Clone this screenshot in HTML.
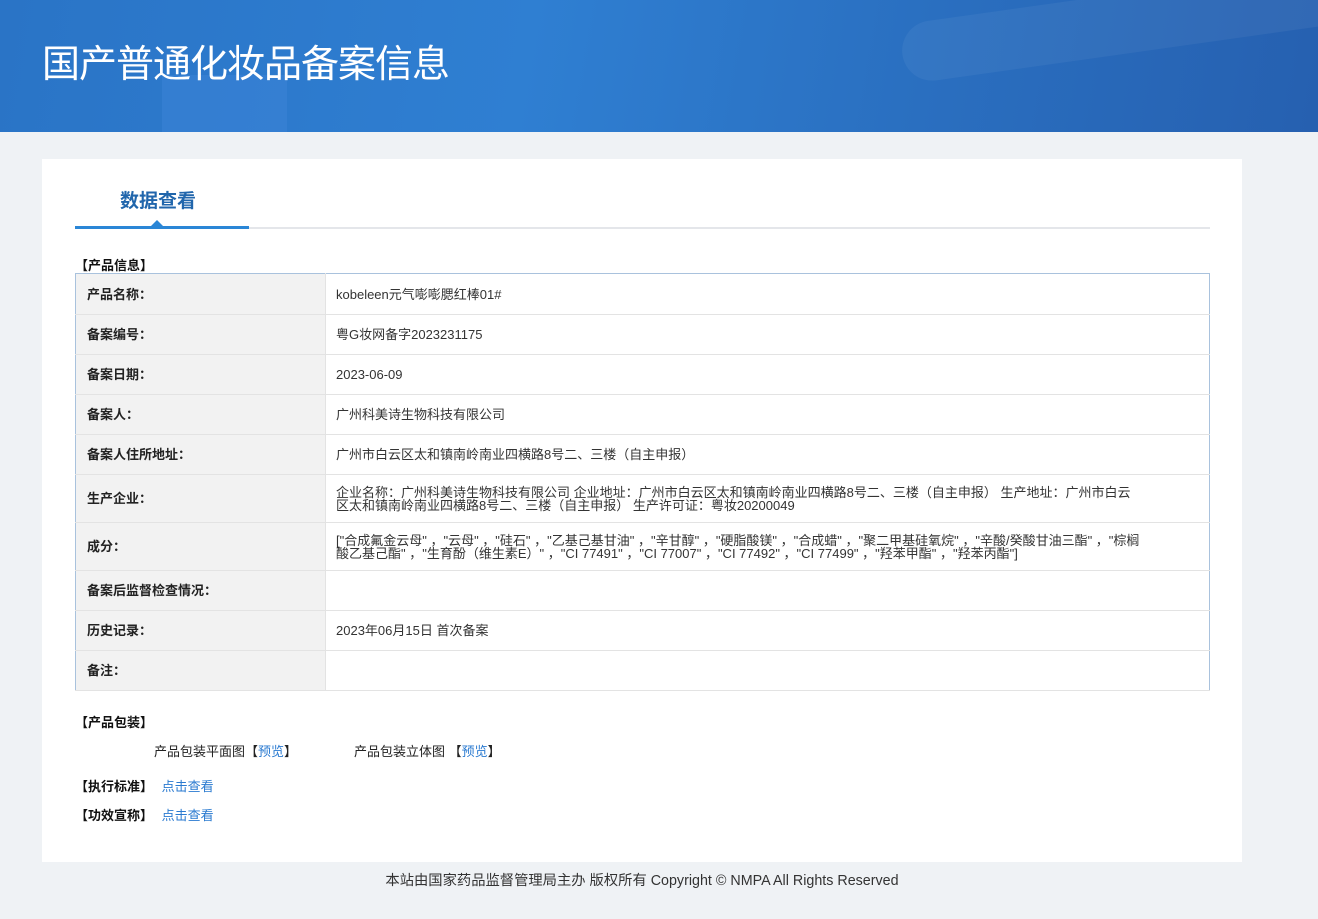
<!DOCTYPE html>
<html><head><meta charset="utf-8"><style>
*{margin:0;padding:0;box-sizing:border-box}
body{width:1318px;height:919px;background:#eff2f5;font-family:"Liberation Sans","Noto Sans CJK SC",sans-serif;font-size:13px;color:#333;position:relative;overflow:hidden}
.hdr{position:absolute;left:0;top:0;width:1318px;height:132px;background:linear-gradient(100deg,#2a74c6 0%,#2f7fd2 40%,#2a6fc0 70%,#2660b0 100%);overflow:hidden}
.hdr .b1{position:absolute;left:162px;top:75px;width:125px;height:60px;background:#3b82d6;opacity:.6}
.hdr .b2{position:absolute;left:900px;top:-10px;width:500px;height:60px;border-radius:40px;background:rgba(255,255,255,.05);transform:rotate(-8deg)}
.hdr h1{position:absolute;left:42px;top:33px;font-size:38px;font-weight:normal;color:#fff;letter-spacing:-1px}
.card{position:absolute;left:42px;top:159px;width:1200px;height:703px;background:#fff}
.tabline{position:absolute;left:33px;top:68px;width:1135px;height:2px;background:#e4e6ea}
.tabact{position:absolute;left:33px;top:67px;width:174px;height:3px;background:#2a86d6}
.tri{position:absolute;left:108px;top:61px;width:0;height:0;border-left:7px solid transparent;border-right:7px solid transparent;border-bottom:7px solid #2a86d6}
.tab{position:absolute;left:78px;top:27px;font-size:19px;font-weight:bold;color:#2166ac}
.sec{position:absolute;font-weight:bold;color:#111;font-size:13px}
table{position:absolute;left:33px;top:114px;width:1135px;border-collapse:collapse;border:1px solid #a9c2dd}
td{border-bottom:1px solid #e3e3e3;vertical-align:middle;font-size:13px;line-height:13px}
td.l{width:250px;background:#f2f2f2;font-weight:bold;padding-left:11px;color:#222;border-right:1px solid #e3e3e3}
td.v{padding-left:10px;padding-right:55px;color:#333}
.a{color:#2a7ad0}
</style></head><body>
<div class="hdr"><div class="b2"></div><div class="b1"></div><h1>国产普通化妆品备案信息</h1></div>
<div class="card">
<div class="tab">数据查看</div>
<div class="tabline"></div><div class="tabact"></div><div class="tri"></div>
<div class="sec" style="left:33px;top:96px">【产品信息】</div>
<table>
<tr style="height:41px"><td class="l">产品名称：</td><td class="v">kobeleen元气嘭嘭腮红棒01#</td></tr>
<tr style="height:40px"><td class="l">备案编号：</td><td class="v">粤G妆网备字2023231175</td></tr>
<tr style="height:40px"><td class="l">备案日期：</td><td class="v">2023-06-09</td></tr>
<tr style="height:40px"><td class="l">备案人：</td><td class="v">广州科美诗生物科技有限公司</td></tr>
<tr style="height:40px"><td class="l">备案人住所地址：</td><td class="v">广州市白云区太和镇南岭南业四横路8号二、三楼（自主申报）</td></tr>
<tr style="height:48px"><td class="l">生产企业：</td><td class="v">企业名称：广州科美诗生物科技有限公司 企业地址：广州市白云区太和镇南岭南业四横路8号二、三楼（自主申报） 生产地址：广州市白云<br>区太和镇南岭南业四横路8号二、三楼（自主申报） 生产许可证：粤妆20200049</td></tr>
<tr style="height:48px"><td class="l">成分：</td><td class="v">["合成氟金云母" ，"云母" ，"硅石" ，"乙基己基甘油" ，"辛甘醇" ，"硬脂酸镁" ，"合成蜡" ，"聚二甲基硅氧烷" ，"辛酸/癸酸甘油三酯" ，"棕榈<br>酸乙基己酯" ，"生育酚（维生素E）" ，"CI 77491" ，"CI 77007" ，"CI 77492" ，"CI 77499" ，"羟苯甲酯" ，"羟苯丙酯"]</td></tr>
<tr style="height:40px"><td class="l">备案后监督检查情况：</td><td class="v"></td></tr>
<tr style="height:40px"><td class="l">历史记录：</td><td class="v">2023年06月15日 首次备案</td></tr>
<tr style="height:40px"><td class="l">备注：</td><td class="v"></td></tr>
</table>
<div class="sec" style="left:33px;top:553px">【产品包装】</div>
<div style="position:absolute;left:112px;top:582px;color:#222">产品包装平面图【<span class="a">预览</span>】</div>
<div style="position:absolute;left:312px;top:582px;color:#222">产品包装立体图 【<span class="a">预览</span>】</div>
<div style="position:absolute;left:33px;top:617px"><b style="color:#111">【执行标准】</b> <span class="a" style="margin-left:5px">点击查看</span></div>
<div style="position:absolute;left:33px;top:646px"><b style="color:#111">【功效宣称】</b> <span class="a" style="margin-left:5px">点击查看</span></div>
</div>
<div style="position:absolute;left:0;width:1284px;top:869px;text-align:center;font-size:14.3px;color:#333">本站由国家药品监督管理局主办 版权所有 Copyright © NMPA All Rights Reserved</div>
</body></html>
